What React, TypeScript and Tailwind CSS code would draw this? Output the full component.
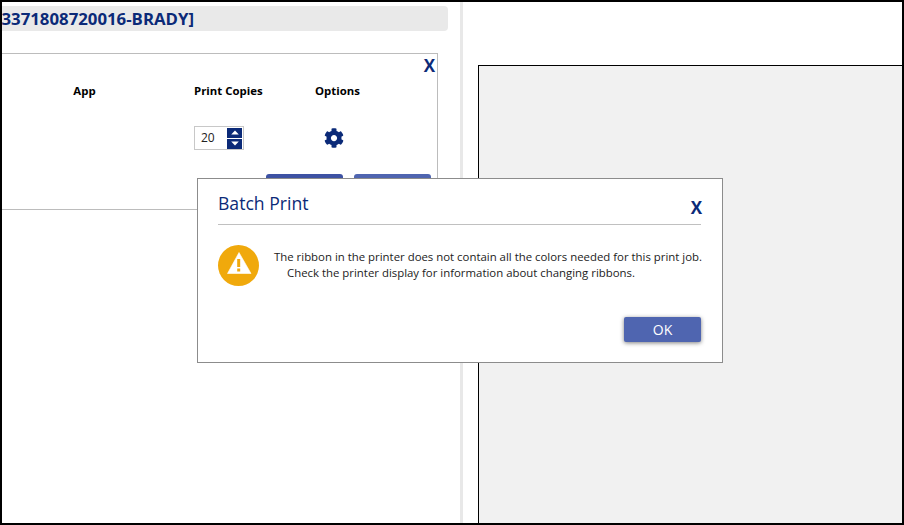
import { FaCog } from "react-icons/fa";

const navy = "text-[#0b2a78]";

function Spinner() {
  return (
    <div className="flex h-[24px] w-[50px] items-center justify-between border border-[#c8c8c8] pl-[6px] pr-[1px]">
      <span className="text-[12px] leading-none text-[#222]">20</span>
      <div className="flex flex-col gap-[1px]">
        <button className="flex h-[10px] w-[15px] items-center justify-center bg-[#0b2a78]">
          <svg width="8" height="5" viewBox="0 0 8 5"><path d="M4 0.5L7.8 4.5H0.2Z" fill="#fff" /></svg>
        </button>
        <button className="flex h-[10px] w-[15px] items-center justify-center bg-[#0b2a78]">
          <svg width="8" height="5" viewBox="0 0 8 5"><path d="M4 4.5L7.8 0.5H0.2Z" fill="#fff" /></svg>
        </button>
      </div>
    </div>
  );
}

function WarningIcon() {
  return (
    <svg width="41" height="41" viewBox="0 0 41 41" className="shrink-0">
      <circle cx="20.5" cy="20.5" r="20.5" fill="#f0a90c" />
      <path d="M21 7.5L33 28.5H9.5Z" fill="#fff" stroke="#fff" strokeWidth="0.6" strokeLinejoin="round" />
      <rect x="19.2" y="14" width="3" height="8" fill="#f0a90c" />
      <rect x="19.2" y="23.5" width="3" height="3" fill="#f0a90c" />
    </svg>
  );
}

function BatchPrintDialog() {
  return (
    <div className="absolute left-[195px] top-[176px] flex h-[185px] w-[526px] flex-col border border-[#8c8c8c] bg-white pl-[20px] pr-[21px]">
      <div className="flex h-[46px] items-end justify-between border-b border-[#c0c0c0] pb-[9px]">
        <span className={`text-[17.6px] leading-[24px] ${navy}`}>Batch Print</span>
        <span className={`text-[17px] font-bold leading-none ${navy} -mb-[1px] -mr-[1px]`}>X</span>
      </div>
      <div className="mt-[20px] flex gap-[15px]">
        <WarningIcon />
        <div className="whitespace-nowrap pt-[4px] text-[11.4px] leading-[16px] text-[#222]">
          <div>The ribbon in the printer does not contain all the colors needed for this print job.</div>
          <div className="pl-[13px]">Check the printer display for information about changing ribbons.</div>
        </div>
      </div>
      <div className="mt-[31px] flex justify-end">
        <button className="h-[25px] w-[77px] rounded-[2px] bg-[#4f65b0] text-[14px] text-white shadow-[0_1px_4px_rgba(0,0,0,0.5)]">
          OK
        </button>
      </div>
    </div>
  );
}

export default function App() {
  return (
    <div className="relative flex h-[525px] w-[904px] overflow-hidden border-2 border-black bg-white font-['Open_Sans',sans-serif]">
      <div className="flex w-[458px] shrink-0 flex-col pt-[4px]">
        <div className="flex h-[25px] w-[446px] items-center overflow-hidden rounded-r-[4px] bg-[#e9e9e9]">
          <div className="flex w-[192px] justify-end overflow-hidden">
            <span className={`whitespace-nowrap text-[16.8px] font-bold ${navy}`}>3371808720016-BRADY]</span>
          </div>
        </div>
        <div className="relative mt-[22px] h-[157px] w-[436px] border-y border-r border-[#bcbcbc] pt-[29px]">
          <span className={`absolute right-[2px] top-[2px] text-[17px] font-bold leading-[20px] ${navy}`}>X</span>
          <div className="flex text-[11.4px] font-bold leading-[16px] text-black">
            <div className="w-[165px] text-center">App</div>
            <div className="ml-[27px] w-[122px]">Print Copies</div>
            <div className="-ml-[1px]">Options</div>
          </div>
          <div className="mt-[27px] flex items-center">
            <div className="ml-[192px] w-[108px]">
              <Spinner />
            </div>
            <FaCog className="ml-[22px] text-[#0b2a78]" size={20} />
          </div>
          <div className="ml-[264px] mt-[24px] flex gap-[11px]">
            <button className="h-[25px] w-[77px] rounded-[3px] bg-[#3d52a3]" />
            <button className="h-[25px] w-[77px] rounded-[3px] bg-[#4f65b0]" />
          </div>
        </div>
      </div>
      <div className="w-[3px] shrink-0 bg-[#e8e8e8]" />
      <div className="flex-1 pl-[15px] pt-[63px]">
        <div className="h-full border-l border-t border-black bg-[#f1f1f1]" />
      </div>
      <BatchPrintDialog />
    </div>
  );
}
